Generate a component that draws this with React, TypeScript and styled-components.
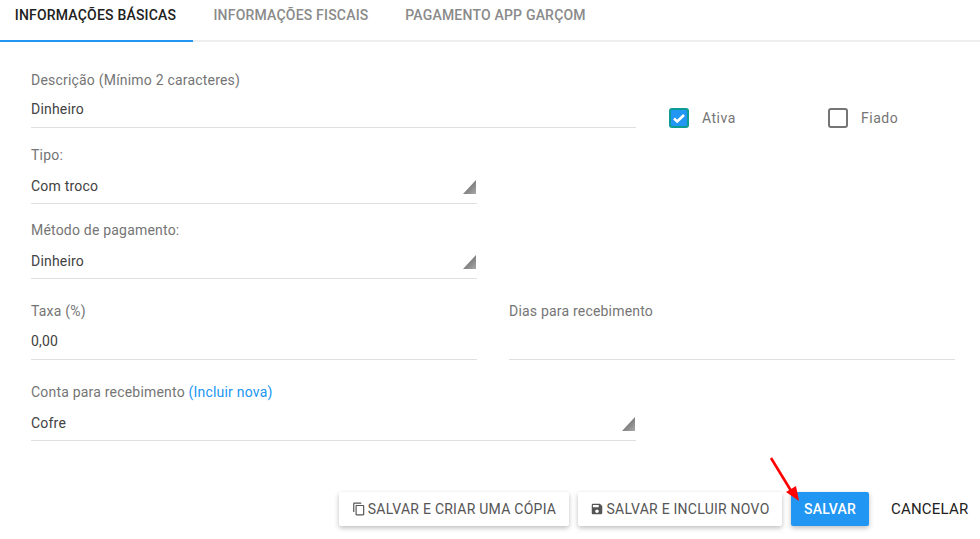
import { ReactNode } from "react";
import styled, { createGlobalStyle } from "styled-components";
import { MdContentCopy, MdSave } from "react-icons/md";

const GlobalStyle = createGlobalStyle`
  html, body {
    margin: 0;
    padding: 0;
    background: #fff;
    font-family: Roboto, "Liberation Sans", sans-serif;
    overflow: hidden;
  }
`;

const Page = styled.div`
  width: 980px;
  height: 539px;
  position: relative;
`;

const Tabs = styled.div`
  display: flex;
  height: 40px;
  border-bottom: 2px solid #eeeeee;
`;

const Tab = styled.div<{ $active?: boolean; $width: number }>`
  width: ${(p) => p.$width}px;
  height: 42px;
  box-sizing: border-box;
  padding: 7px ${(p) => (p.$active ? 2 : 0)}px 0 0;
  line-height: 17px;
  text-align: center;
  font-size: 14px;
  font-weight: 500;
  letter-spacing: 0.2px;
  white-space: nowrap;
  color: ${(p) => (p.$active ? "#212121" : "#8a8a8a")};
  border-bottom: 2px solid ${(p) => (p.$active ? "#2196f3" : "transparent")};
`;

const Form = styled.div`
  padding: 30px 25px 0 31px;
  display: flex;
  flex-direction: column;
`;

const Row = styled.div<{ $top?: number; $gap?: number }>`
  display: flex;
  gap: ${(p) => p.$gap ?? 0}px;
  margin-top: ${(p) => p.$top ?? 0}px;
`;

const FieldBox = styled.div<{ $width: number }>`
  width: ${(p) => p.$width}px;
  flex: none;
`;

const Label = styled.div`
  font-size: 14px;
  line-height: 16px;
  color: #757575;
  letter-spacing: 0.2px;
`;

const Link = styled.span`
  color: #2196f3;
`;

const Control = styled.div<{ $top: number; $bottom: number }>`
  display: flex;
  justify-content: space-between;
  height: 18px;
  padding: ${(p) => p.$top}px 1px ${(p) => p.$bottom}px 0;
  border-bottom: 1px solid #e0e0e0;
`;

const Value = styled.span`
  font-size: 14px;
  line-height: 18px;
  color: #424242;
  letter-spacing: 0.2px;
`;

const SelectArrow = styled.span`
  width: 13px;
  height: 14px;
  margin-top: 3px;
  background: linear-gradient(135deg, #777 40%, #aaa 100%);
  clip-path: polygon(100% 0, 100% 100%, 0 100%);
`;

const Checks = styled.div`
  display: flex;
  align-items: center;
  margin: 36px 0 0 33px;
  height: 20px;
`;

const CheckItem = styled.div`
  display: flex;
  align-items: center;
  gap: 13px;
  width: 159px;
  font-size: 14px;
  color: #757575;
  letter-spacing: 0.5px;
`;

const CheckBox = styled.span<{ $checked?: boolean }>`
  width: 20px;
  height: 20px;
  box-sizing: border-box;
  border-radius: 3px;
  display: flex;
  align-items: center;
  justify-content: center;
  border: 2px solid ${(p) => (p.$checked ? "#0d9c94" : "#757575")};
  background: ${(p) => (p.$checked ? "#2196f3" : "#fff")};
`;

const Footer = styled.div`
  position: absolute;
  right: 0;
  top: 492px;
  display: flex;
  align-items: center;
`;

const Button = styled.div<{ $primary?: boolean; $width: number; $left?: number }>`
  width: ${(p) => p.$width}px;
  height: 34px;
  margin-left: ${(p) => p.$left ?? 0}px;
  display: flex;
  align-items: center;
  justify-content: center;
  gap: 2px;
  border-radius: 2px;
  font-size: 14px;
  letter-spacing: 0.25px;
  font-weight: ${(p) => (p.$primary ? 500 : 400)};
  color: ${(p) => (p.$primary ? "#fff" : "#555")};
  background: ${(p) => (p.$primary ? "#2196f3" : "#fff")};
  box-shadow: 0 2px 5px rgba(0, 0, 0, 0.26);
`;

const Cancel = styled.div`
  width: 78px;
  margin: 0 11px 0 22px;
  font-size: 15px;
  letter-spacing: 0.2px;
  color: #212121;
  white-space: nowrap;
`;

const Pointer = styled.svg`
  position: absolute;
  left: 765px;
  top: 452px;
`;

function Field(props: {
  label: ReactNode;
  value?: string;
  width: number;
  top?: number;
  bottom?: number;
  select?: boolean;
}) {
  return (
    <FieldBox $width={props.width}>
      <Label>{props.label}</Label>
      <Control $top={props.top ?? 14} $bottom={props.bottom ?? 8}>
        <Value>{props.value}</Value>
        {props.select && <SelectArrow />}
      </Control>
    </FieldBox>
  );
}

export default function App() {
  return (
    <Page>
      <GlobalStyle />
      <Tabs>
        <Tab $active $width={193}>INFORMAÇÕES BÁSICAS</Tab>
        <Tab $width={196}>INFORMAÇÕES FISCAIS</Tab>
        <Tab $width={213}>PAGAMENTO APP GARÇOM</Tab>
      </Tabs>
      <Form>
        <Row>
          <Field label="Descrição (Mínimo 2 caracteres)" value="Dinheiro" width={605} top={12} bottom={9} />
          <Checks>
            <CheckItem>
              <CheckBox $checked>
                <svg width="14" height="14" viewBox="0 0 14 14">
                  <path d="M2 7.5l3.2 3L12 4" fill="none" stroke="#fff" strokeWidth="2.6" />
                </svg>
              </CheckBox>
              Ativa
            </CheckItem>
            <CheckItem>
              <CheckBox />
              Fiado
            </CheckItem>
          </Checks>
        </Row>
        <Row $top={19}>
          <Field label="Tipo:" value="Com troco" width={446} select />
        </Row>
        <Row $top={18}>
          <Field label="Método de pagamento:" value="Dinheiro" width={446} select />
        </Row>
        <Row $top={24} $gap={32}>
          <Field label="Taxa (%)" value="0,00" width={446} top={13} bottom={9} />
          <Field label="Dias para recebimento" width={446} top={13} bottom={9} />
        </Row>
        <Row $top={24}>
          <Field
            label={<>Conta para recebimento <Link>(Incluir nova)</Link></>}
            value="Cofre"
            width={605}
            select
          />
        </Row>
      </Form>
      <Footer>
        <Button $width={230}>
          <MdContentCopy size={14} />
          SALVAR E CRIAR UMA CÓPIA
        </Button>
        <Button $width={204} $left={9}>
          <MdSave size={14} />
          SALVAR E INCLUIR NOVO
        </Button>
        <Button $primary $width={78} $left={9}>SALVAR</Button>
        <Cancel>CANCELAR</Cancel>
      </Footer>
      <Pointer width="40" height="52" viewBox="0 0 40 52">
        <path d="M6 6L28 42" stroke="#f00" strokeWidth="2.6" fill="none" />
        <path d="M34 49L21 40L31 34Z" fill="#f00" />
      </Pointer>
    </Page>
  );
}
